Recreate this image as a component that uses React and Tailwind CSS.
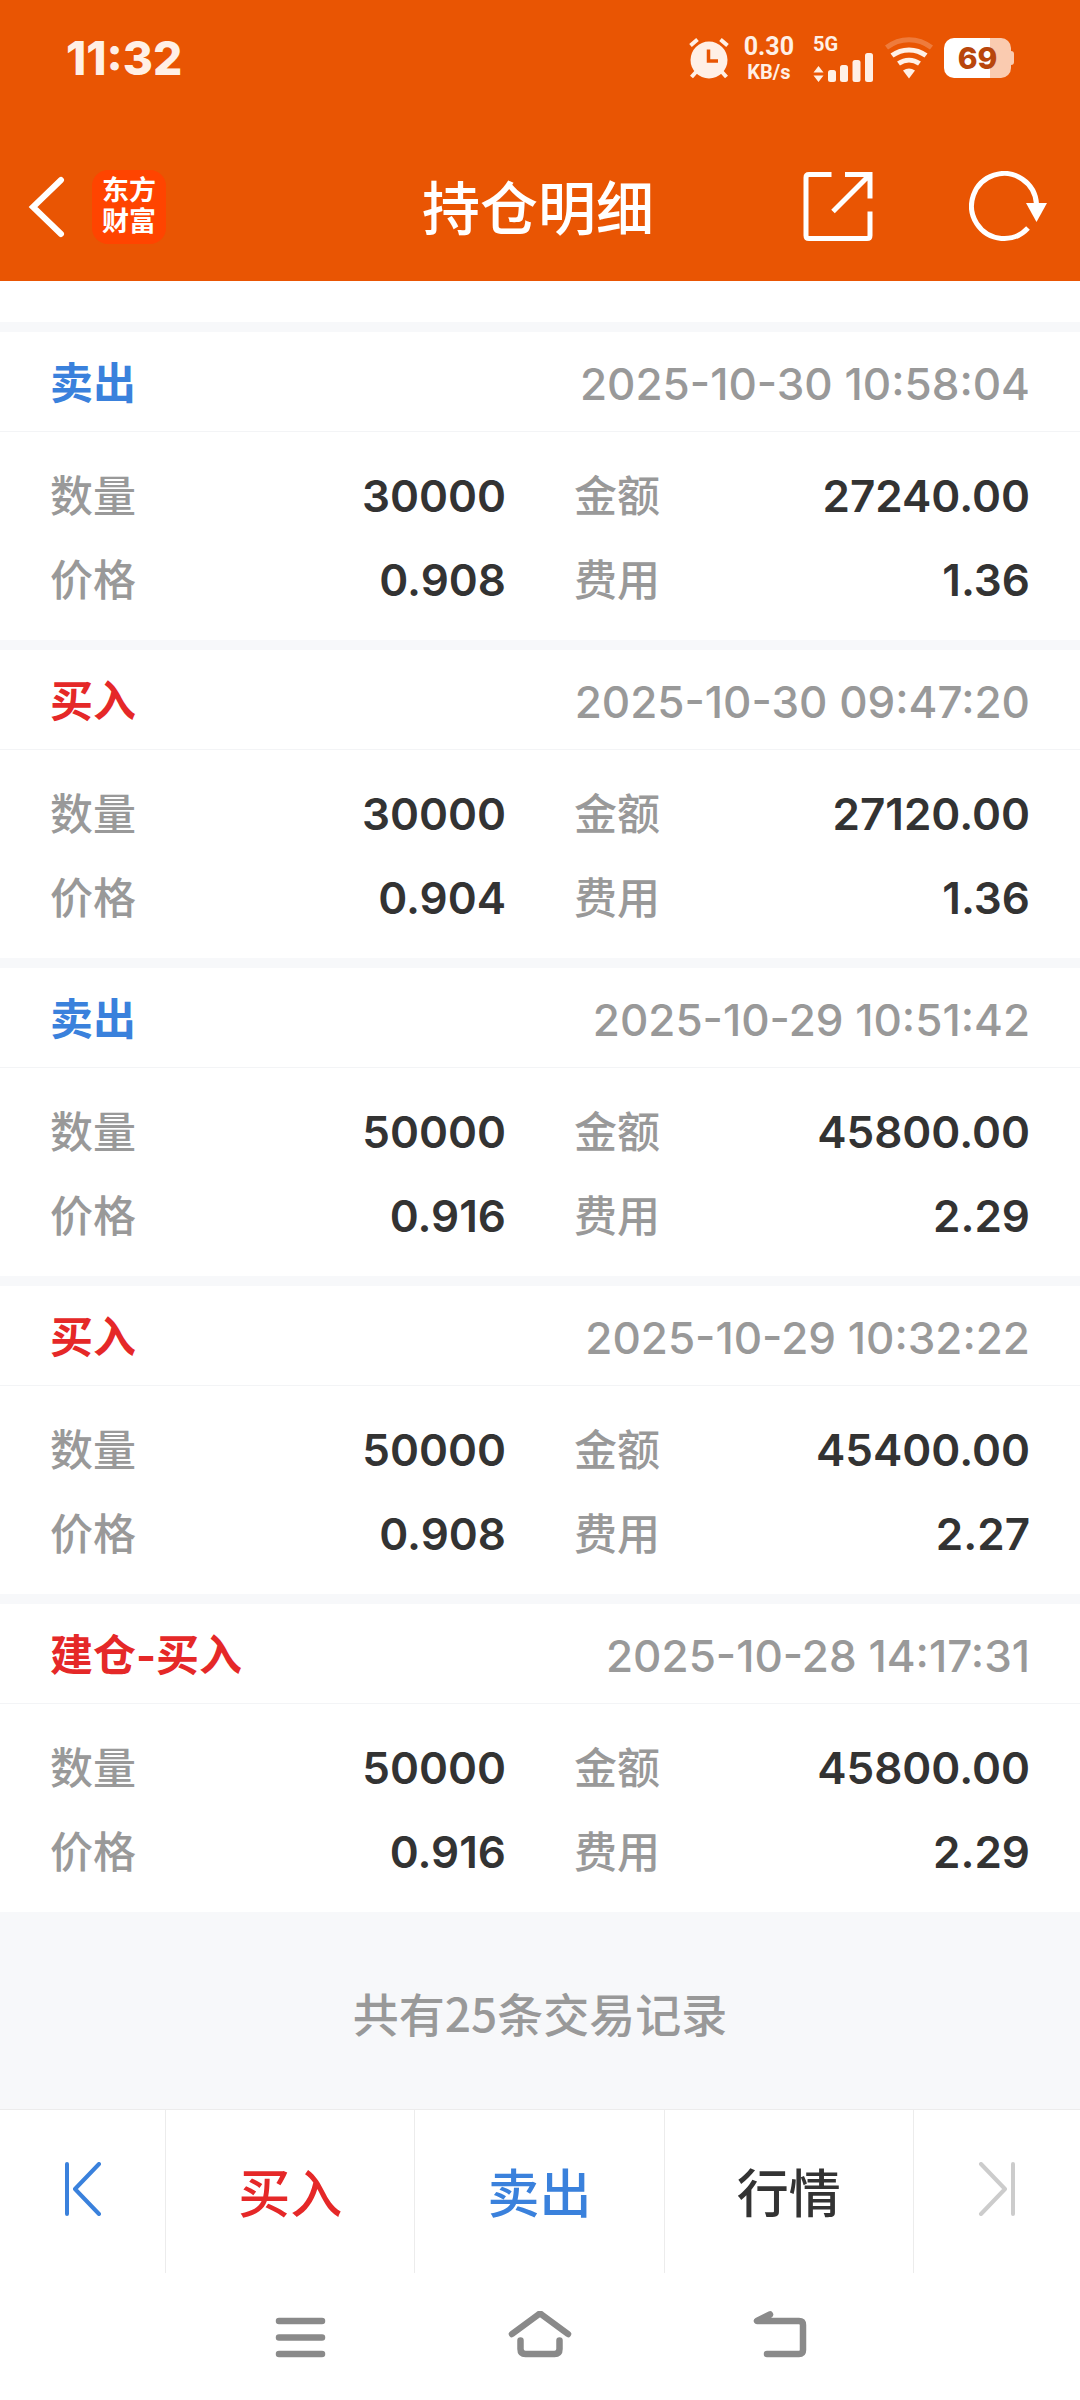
import React from 'react';

const records = [
  { id: 1, type: '卖出', side: 'sell', time: '2025-10-30 10:58:04', quantity: '30000', amount: '27240.00', price: '0.908', fee: '1.36' },
  { id: 2, type: '买入', side: 'buy', time: '2025-10-30 09:47:20', quantity: '30000', amount: '27120.00', price: '0.904', fee: '1.36' },
  { id: 3, type: '卖出', side: 'sell', time: '2025-10-29 10:51:42', quantity: '50000', amount: '45800.00', price: '0.916', fee: '2.29' },
  { id: 4, type: '买入', side: 'buy', time: '2025-10-29 10:32:22', quantity: '50000', amount: '45400.00', price: '0.908', fee: '2.27' },
  { id: 5, type: '建仓-买入', side: 'buy', time: '2025-10-28 14:17:31', quantity: '50000', amount: '45800.00', price: '0.916', fee: '2.29' },
];

const StatusBar = () => (
  <div className="h-[132px] px-[66px] pb-[16px] flex items-center justify-between text-[#fff0e6]">
    <span className="text-[46px] leading-[46px] font-extrabold">11:32</span>
    <div className="flex items-center">
      {/* Alarm */}
      <svg width="42" height="42" viewBox="0 0 42 42" fill="none" className="mr-[14px]">
        <circle cx="21" cy="23" r="18.5" fill="currentColor" />
        <path d="M2.5 8.5L9.5 2.5M39.5 8.5L32.5 2.5" stroke="currentColor" strokeWidth="4" />
        <path d="M8 35l-4.500 5M34 35l4.500 5" stroke="currentColor" strokeWidth="4" />
        <path d="M20.500 12.500v11.500h9.500" stroke="#e95503" strokeWidth="3.500" />
      </svg>
      {/* Net speed */}
      <div className="flex flex-col items-center font-['Roboto',sans-serif] font-bold mr-[19px]">
        <span className="text-[25px] leading-[27px]">0.30</span>
        <span className="text-[20px] leading-[24px]">KB/s</span>
      </div>
      {/* Mobile signal */}
      <div className="flex flex-col mr-[12px]">
        <span className="font-['Roboto',sans-serif] text-[20px] leading-[18px] font-bold">5G</span>
        <svg width="60" height="29" viewBox="0 0 60 29" fill="currentColor">
          <path d="M5.500 13l5 6.500h-10zM5.500 29l5-6.500h-10z" />
          <rect x="15" y="17" width="8" height="12" rx="2.5" />
          <rect x="27" y="12" width="8" height="17" rx="2.5" />
          <rect x="39.5" y="7" width="8" height="22" rx="2.5" />
          <rect x="52" y="0" width="8" height="29" rx="2.5" />
        </svg>
      </div>
      {/* Wi-Fi */}
      <svg width="48" height="42" viewBox="0 0 48 42" fill="none" stroke="currentColor" className="mr-[11px]">
        <path d="M1.500 10.500C15 0 33 0 46.500 10.500" strokeWidth="5" opacity=".25" />
        <path d="M7 18.500C17 11 31 11 41 18.500" strokeWidth="5" />
        <path d="M13.500 26.500C20 22 28 22 34.500 26.500" strokeWidth="5" />
        <path d="M18 33.500Q24 29.500 30 33.500L24 41.500z" fill="currentColor" stroke="none" />
      </svg>
      {/* Battery */}
      <div className="flex items-center">
        <div className="w-[67px] h-[40px] rounded-[10px] bg-linear-to-r from-white from-68% to-[#facbb0] to-68% flex items-center justify-center">
          <span className="text-[30px] leading-[40px] font-extrabold text-[#b8460c]">69</span>
        </div>
        <div className="w-[3px] h-[14px] rounded-r-[3px] bg-[#facbb0]" />
      </div>
    </div>
  </div>
);

const Header = () => (
  <header className="bg-[#e95503] text-white">
    <StatusBar />
    <div className="h-[149px] pl-[28px] pr-[32px] grid grid-cols-[1fr_auto_1fr] items-center">
      <div className="flex items-center">
        <button aria-label="返回" className="mr-[26px]">
          <svg width="38" height="62" viewBox="0 0 38 62" fill="none" stroke="currentColor" strokeWidth="6" strokeLinecap="round">
            <path d="M33 4L5 31l28 27" />
          </svg>
        </button>
        <div className="w-[74px] h-[74px] rounded-[16px] bg-[#ff4400] flex flex-col items-center justify-center pb-[2px] text-[27px] leading-[31px] font-bold">
          <span>东方</span>
          <span>财富</span>
        </div>
      </div>
      <h1 className="pt-[4px] text-[58px] leading-[72px] font-medium">持仓明细</h1>
      <div className="flex items-center justify-end gap-[96px]">
        <button aria-label="分享">
          <svg width="70" height="70" viewBox="0 0 70 70" fill="none" stroke="currentColor" strokeWidth="5">
            <path d="M28.500 2.500H6Q3 2.500 3 5.500V63.500Q3 66.500 6 66.500H64Q67 66.500 67 63.500V39.500" />
            <path d="M42 2.500H67V26.500M67 2.500L30 39.500" />
          </svg>
        </button>
        <button aria-label="刷新">
          <svg width="79" height="72" viewBox="0 0 79 72" fill="none" stroke="currentColor" strokeWidth="5">
            <path d="M59 57A32.500 32.500 0 1 1 67.500 33" />
            <path d="M57 32h21L67.500 51z" fill="currentColor" stroke="none" />
          </svg>
        </button>
      </div>
    </div>
  </header>
);

const Field = ({ label, value }) => (
  <div className="flex items-center justify-between">
    <dt className="text-[43px] font-medium text-[#999999]">{label}</dt>
    <dd className="text-[44px] font-semibold text-[#333333]">{value}</dd>
  </div>
);

const RecordCard = ({ record }) => (
  <article className="bg-white">
    <div className="h-[100px] px-[50px] pt-[4px] flex items-center justify-between border-b border-[#f3f4f6]">
      <h2 className={`text-[43px] font-bold ${record.side === 'buy' ? 'text-[#e52828]' : 'text-[#3a81dc]'}`}>
        {record.type}
      </h2>
      <time className="text-[44px] font-medium text-[#999999]">{record.time}</time>
    </div>
    <dl className="px-[50px] pt-[22px] pb-[18px] grid grid-cols-2 gap-x-[68px] leading-[84px]">
      <Field label="数量" value={record.quantity} />
      <Field label="金额" value={record.amount} />
      <Field label="价格" value={record.price} />
      <Field label="费用" value={record.fee} />
    </dl>
  </article>
);

const TradeBar = () => (
  <div className="h-[164px] flex border-t border-[#ececec] divide-x divide-[#ececec] text-[52px] font-medium bg-white">
    <button aria-label="上一个" className="w-[166px] pb-[6px] flex items-center justify-center text-[#3a81dc]">
      <svg width="38" height="54" viewBox="0 0 38 54" fill="none" stroke="currentColor" strokeWidth="4" strokeLinecap="round" strokeLinejoin="round">
        <path d="M3 2v50M35 2L11 27l24 25" />
      </svg>
    </button>
    <button className="flex-1 pt-[6px] text-[#e52828]">买入</button>
    <button className="flex-1 pt-[6px] text-[#3a81dc]">卖出</button>
    <button className="flex-1 pt-[6px] text-[#333333]">行情</button>
    <button aria-label="下一个" className="w-[166px] pb-[6px] flex items-center justify-center text-[#cccccc]">
      <svg width="38" height="54" viewBox="0 0 38 54" fill="none" stroke="currentColor" strokeWidth="4" strokeLinecap="round" strokeLinejoin="round">
        <path d="M35 2v50M3 2l24 25L3 52" />
      </svg>
    </button>
  </div>
);

const SystemNav = () => (
  <nav className="h-[127px] pb-[2px] bg-white flex items-center justify-center gap-[176px] text-[#8a8a8a]">
    <button aria-label="菜单">
      <svg width="64" height="50" viewBox="0 0 64 50" fill="none" stroke="currentColor" strokeWidth="6.5" strokeLinecap="round">
        <path d="M11 10h43M11 26.500h43M11 43h43" />
      </svg>
    </button>
    <button aria-label="主页">
      <svg width="64" height="50" viewBox="0 0 64 50" fill="none" stroke="currentColor" strokeWidth="6.5" strokeLinecap="round" strokeLinejoin="round">
        <path d="M4 23L30.500 3.500Q32 2.500 33.500 3.500L60 23" />
        <path d="M12.500 29.500V38Q12.500 43 17.500 43H46.500Q51.500 43 51.500 38V29.500" />
      </svg>
    </button>
    <button aria-label="后退">
      <svg width="64" height="50" viewBox="0 0 64 50" fill="none" stroke="currentColor" strokeWidth="6.5" strokeLinecap="round" strokeLinejoin="round">
        <path d="M22 3.500L9 10H51Q55 10 55 14V39Q55 43 51 43H19" />
      </svg>
    </button>
  </nav>
);

export default function App() {
  return (
    <div className="min-h-screen flex flex-col bg-[#f7f8fa] font-['Inter','Noto_Sans_CJK_SC',sans-serif]">
      <Header />
      <main className="flex-1 flex flex-col">
        <div className="h-[41px] mb-[10px] bg-white" />
        <div className="flex flex-col gap-[10px]">
          {records.map((record) => (
            <RecordCard key={record.id} record={record} />
          ))}
        </div>
        <p className="flex-1 flex items-center justify-center pt-[4px] font-['Noto_Sans_CJK_SC',sans-serif] text-[46px] font-medium text-[#999999]">
          共有25条交易记录
        </p>
      </main>
      <TradeBar />
      <SystemNav />
    </div>
  );
}
